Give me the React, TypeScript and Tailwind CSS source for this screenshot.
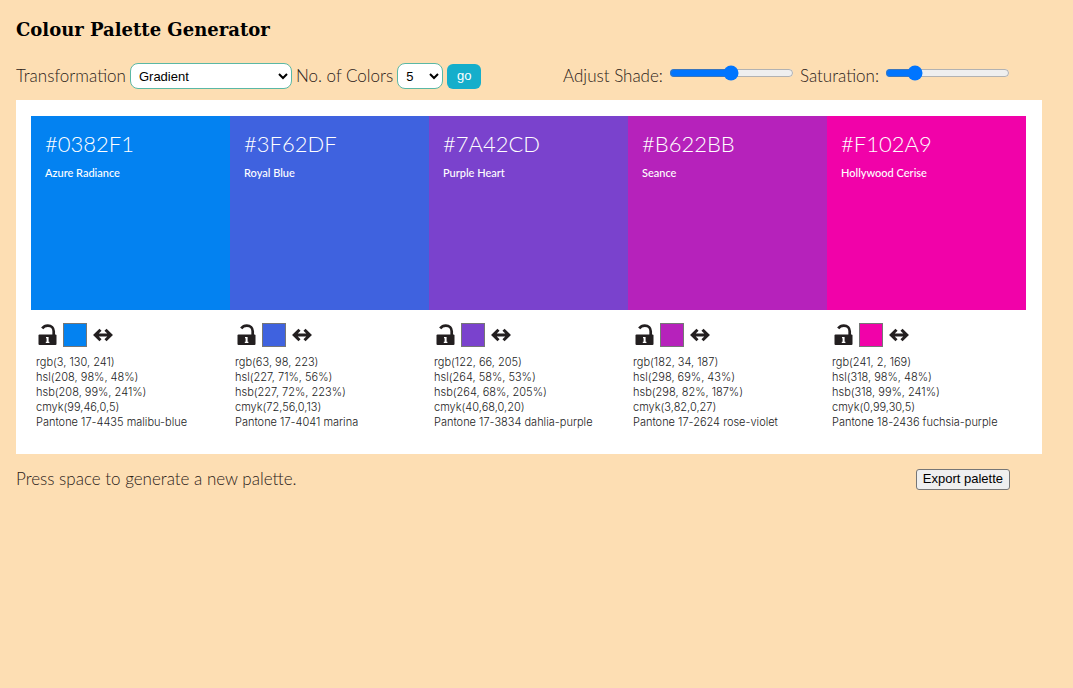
import { useState } from "react";

type Swatch = {
  hex: string;
  name: string;
  rgb: string;
  hsl: string;
  hsb: string;
  cmyk: string;
  pantone: string;
};

const SWATCHES: Swatch[] = [
  {
    hex: "#0382F1",
    name: "Azure Radiance",
    rgb: "rgb(3, 130, 241)",
    hsl: "hsl(208, 98%, 48%)",
    hsb: "hsb(208, 99%, 241%)",
    cmyk: "cmyk(99,46,0,5)",
    pantone: "Pantone 17-4435 malibu-blue",
  },
  {
    hex: "#3F62DF",
    name: "Royal Blue",
    rgb: "rgb(63, 98, 223)",
    hsl: "hsl(227, 71%, 56%)",
    hsb: "hsb(227, 72%, 223%)",
    cmyk: "cmyk(72,56,0,13)",
    pantone: "Pantone 17-4041 marina",
  },
  {
    hex: "#7A42CD",
    name: "Purple Heart",
    rgb: "rgb(122, 66, 205)",
    hsl: "hsl(264, 58%, 53%)",
    hsb: "hsb(264, 68%, 205%)",
    cmyk: "cmyk(40,68,0,20)",
    pantone: "Pantone 17-3834 dahlia-purple",
  },
  {
    hex: "#B622BB",
    name: "Seance",
    rgb: "rgb(182, 34, 187)",
    hsl: "hsl(298, 69%, 43%)",
    hsb: "hsb(298, 82%, 187%)",
    cmyk: "cmyk(3,82,0,27)",
    pantone: "Pantone 17-2624 rose-violet",
  },
  {
    hex: "#F102A9",
    name: "Hollywood Cerise",
    rgb: "rgb(241, 2, 169)",
    hsl: "hsl(318, 98%, 48%)",
    hsb: "hsb(318, 99%, 241%)",
    cmyk: "cmyk(0,99,30,5)",
    pantone: "Pantone 18-2436 fuchsia-purple",
  },
];

function UnlockIcon() {
  return (
    <svg width="19" height="22" viewBox="0 0 19 22" aria-hidden="true">
      <path
        d="M4.2 4.4C5.6 2.5 7.6 1.6 9.8 1.6c3.6 0 5.9 2.3 5.9 5.6V12"
        fill="none"
        stroke="#231f20"
        strokeWidth="2.7"
      />
      <rect x="0.5" y="10.5" width="18" height="10.5" rx="1" fill="#231f20" />
      <path d="M8 13h2.6v4.8h.8V19H7.8v-1.2h.8v-3.6H8z" fill="#fff" />
    </svg>
  );
}

function MoveIcon() {
  return (
    <svg width="20" height="14" viewBox="0 0 20 14" aria-hidden="true">
      <path
        d="M2.5 7h15M7.5 1.8L2.2 7l5.3 5.2M12.5 1.8L17.8 7l-5.3 5.2"
        fill="none"
        stroke="#231f20"
        strokeWidth="3"
      />
    </svg>
  );
}

function SwatchColumn({ swatch }: { swatch: Swatch }) {
  return (
    <li className="min-w-0 flex-1">
      <div
        className="h-[194px] px-3.5 pt-3 font-['Lato',sans-serif] text-white"
        style={{ backgroundColor: swatch.hex }}
      >
        <h2 className="text-[22px] leading-8 font-light">{swatch.hex}</h2>
        <p className="mt-[5px] text-[11px] leading-4 font-medium">{swatch.name}</p>
      </div>
      <div className="flex items-center gap-1.5 px-[7px] pt-[13px]">
        <button type="button" aria-label={`Lock ${swatch.name}`}>
          <UnlockIcon />
        </button>
        <input
          type="color"
          aria-label={`Pick ${swatch.name}`}
          defaultValue={swatch.hex.toLowerCase()}
          className="size-6 appearance-none border border-[#767676] p-0 [&::-webkit-color-swatch-wrapper]:p-0 [&::-webkit-color-swatch]:border-0"
        />
        <button type="button" aria-label={`Move ${swatch.name}`}>
          <MoveIcon />
        </button>
      </div>
      <div className="mt-2 px-[5px] font-['Inter',sans-serif] text-[11px] leading-[15px] font-light text-[#222]">
        <p>{swatch.rgb}</p>
        <p>{swatch.hsl}</p>
        <p>{swatch.hsb}</p>
        <p>{swatch.cmyk}</p>
        <p>{swatch.pantone}</p>
      </div>
    </li>
  );
}

export default function App() {
  const [shade, setShade] = useState(50);
  const [saturation, setSaturation] = useState(20);

  return (
    <div className="min-h-screen bg-[#fddeb3] pr-[31px] pl-4 font-['Lato',sans-serif] text-[17px] leading-6 font-light text-[#2b2118]">
      <h1 className="pt-4 font-['DejaVu_Serif',serif] text-lg font-bold text-black">
        Colour Palette Generator
      </h1>

      <div className="mt-[19px] flex items-center justify-between pr-8">
        <form
          className="flex items-center gap-1"
          onSubmit={(e) => e.preventDefault()}
        >
          <label htmlFor="transformation">Transformation</label>
          <select
            id="transformation"
            className="h-[26px] w-[162px] rounded-lg border border-[#5bb8a5] bg-white px-1 font-['Liberation_Sans',sans-serif] text-[13px] font-normal text-black"
          >
            <option>Gradient</option>
          </select>
          <label htmlFor="count">No. of Colors</label>
          <select
            id="count"
            defaultValue="5"
            className="h-[26px] w-[46px] rounded-lg border border-[#5bb8a5] bg-white px-1 font-['Liberation_Sans',sans-serif] text-[13px] font-normal text-black"
          >
            <option>5</option>
          </select>
          <button
            type="submit"
            className="h-[25px] w-[34px] rounded-md bg-[#15aecb] font-['Liberation_Sans',sans-serif] text-[13px] font-normal text-white"
          >
            go
          </button>
        </form>

        <div className="flex items-center gap-1.5">
          <label htmlFor="shade">Adjust Shade:</label>
          <input
            id="shade"
            type="range"
            value={shade}
            onChange={(e) => setShade(Number(e.target.value))}
            className="mb-1.5 w-[125px]"
          />
          <label htmlFor="saturation">Saturation:</label>
          <input
            id="saturation"
            type="range"
            value={saturation}
            onChange={(e) => setSaturation(Number(e.target.value))}
            className="mb-1.5 w-[125px]"
          />
        </div>
      </div>

      <ul className="mt-[11px] flex bg-white pt-4 pr-4 pb-6 pl-[15px]">
        {SWATCHES.map((swatch) => (
          <SwatchColumn key={swatch.hex} swatch={swatch} />
        ))}
      </ul>

      <div className="mt-[13px] flex items-center justify-between pr-8">
        <p>Press space to generate a new palette.</p>
        <button
          type="button"
          className="h-[21px] rounded-[3px] border border-[#767676] bg-[#efefef] px-1.5 font-['Liberation_Sans',sans-serif] text-[13px] leading-4 font-normal text-black"
        >
          Export palette
        </button>
      </div>
    </div>
  );
}
